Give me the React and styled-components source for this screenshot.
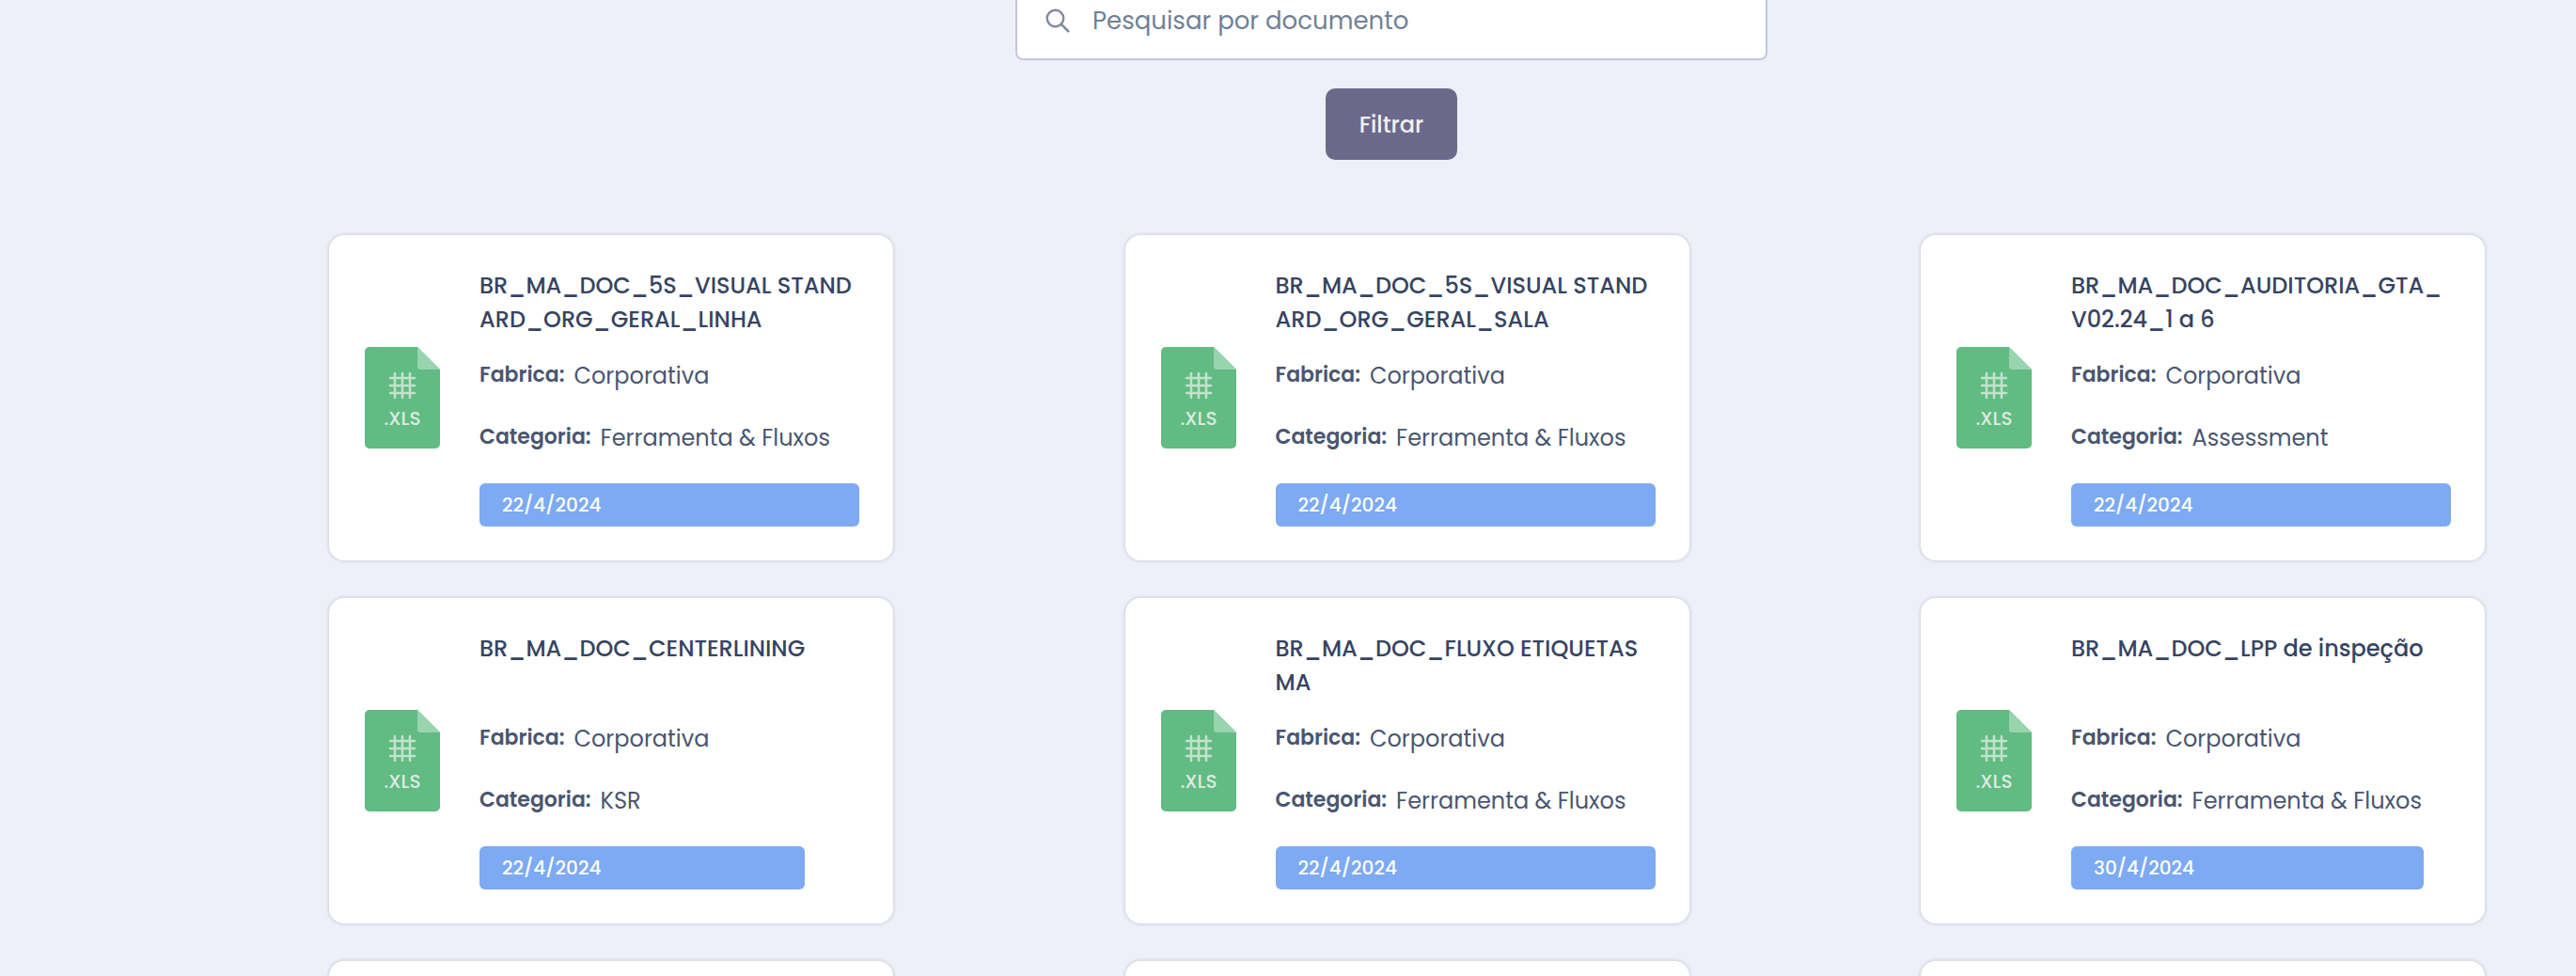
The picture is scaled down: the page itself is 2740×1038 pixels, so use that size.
import React from "react";
import styled, { createGlobalStyle } from "styled-components";
import { HiOutlineSearch } from "react-icons/hi";

const GlobalStyle = createGlobalStyle`
  *, *::before, *::after { box-sizing: border-box; }
  body {
    margin: 0;
    background: #edf0f8;
    color: #4a5670;
    font-family: Poppins, Inter, "Open Sans", sans-serif;
  }
`;

const Page = styled.div`
  height: 100vh;
  overflow: hidden;
  padding-left: 220px;
`;

const Main = styled.main`
  display: flex;
  flex-direction: column;
  gap: 80px;
  margin-top: -20px;
`;

const Filters = styled.form`
  display: flex;
  flex-direction: column;
  align-items: center;
  gap: 30px;
`;

const SearchField = styled.label`
  display: flex;
  align-items: center;
  gap: 22px;
  width: 100%;
  max-width: 800px;
  height: 84px;
  padding: 0 28px;
  border: 2px solid #c3c8d6;
  border-radius: 8px;
  background: #fff;
  color: #828b9e;
`;

const SearchInput = styled.input`
  flex: 1;
  min-width: 0;
  height: 100%;
  padding: 0;
  border: 0;
  outline: 0;
  background: transparent;
  color: #4a5670;
  font: inherit;
  font-size: 26px;

  &::placeholder {
    color: #718096;
    opacity: 1;
  }
`;

const FilterButton = styled.button`
  width: 140px;
  height: 76px;
  border: 0;
  border-radius: 10px;
  background: #6b698b;
  color: #f0f0f2;
  font: inherit;
  font-size: 24px;
  font-weight: 500;
  cursor: pointer;
`;

const Grid = styled.section`
  display: grid;
  grid-template-columns: repeat(3, minmax(0, 600px));
  justify-content: space-between;
  gap: 40px;
  padding: 0 97px 40px 130px;
`;

const Card = styled.article`
  display: flex;
  align-items: center;
  gap: 42px;
  min-height: 346px;
  padding: 36px 36px 36px 38px;
  border-radius: 16px;
  background: #fff;
  box-shadow: 0 0 4px rgba(0, 0, 0, 0.2);
`;

const FileIcon = styled.svg`
  flex: none;
  width: 80px;
  height: 108px;
`;

const Details = styled.div`
  display: flex;
  flex-direction: column;
  gap: 30px;
  min-width: 0;
`;

const Title = styled.h2`
  min-height: 72px;
  margin: 0 0 -6px;
  color: #364462;
  font-size: 24px;
  font-weight: 500;
  line-height: 36px;
  word-break: break-all;
`;

const Field = styled.p`
  display: flex;
  align-items: flex-start;
  gap: 10px;
  margin: 0;
`;

const FieldLabel = styled.strong`
  font-size: 22px;
  font-weight: 600;
  line-height: 34px;
`;

const FieldValue = styled.span`
  font-size: 24px;
  line-height: 36px;
`;

const DateBadge = styled.time`
  display: block;
  padding: 0 24px;
  border-radius: 6px;
  background: #7daaf2;
  color: #fff;
  font-size: 20px;
  font-weight: 500;
  line-height: 46px;
`;

const documents = [
  { title: "BR_MA_DOC_5S_VISUAL STANDARD_ORG_GERAL_LINHA", category: "Ferramenta & Fluxos", date: "22/4/2024" },
  { title: "BR_MA_DOC_5S_VISUAL STANDARD_ORG_GERAL_SALA", category: "Ferramenta & Fluxos", date: "22/4/2024" },
  { title: "BR_MA_DOC_AUDITORIA_GTA_V02.24_1 a 6", category: "Assessment", date: "22/4/2024" },
  { title: "BR_MA_DOC_CENTERLINING", category: "KSR", date: "22/4/2024" },
  { title: "BR_MA_DOC_FLUXO ETIQUETAS MA", category: "Ferramenta & Fluxos", date: "22/4/2024" },
  { title: "BR_MA_DOC_LPP de inspeção", category: "Ferramenta & Fluxos", date: "30/4/2024" },
];

function XlsIcon() {
  return (
    <FileIcon viewBox="0 0 80 108" role="img" aria-label="XLS">
      <path d="M5 0H56L80 24V103a5 5 0 0 1-5 5H5a5 5 0 0 1-5-5V5a5 5 0 0 1 5-5Z" fill="#61bb82" />
      <path d="M56 0L80 24H59a3 3 0 0 1-3-3Z" fill="#98d4ae" />
      <path
        d="M32 28V54M40 28V54M48 28V54M27 33H53M27 41H53M27 49H53"
        fill="none"
        stroke="#c4e2cd"
        strokeWidth="2.5"
        strokeLinecap="round"
      />
      <text x="40" y="83" textAnchor="middle" fill="#dcebe1" fontSize="20" fontWeight="500">
        .XLS
      </text>
    </FileIcon>
  );
}

function DocumentCard({ title, category, date }) {
  return (
    <Card>
      <XlsIcon />
      <Details>
        <Title>{title}</Title>
        <Field>
          <FieldLabel>Fabrica:</FieldLabel>
          <FieldValue>Corporativa</FieldValue>
        </Field>
        <Field>
          <FieldLabel>Categoria:</FieldLabel>
          <FieldValue>{category}</FieldValue>
        </Field>
        <DateBadge>{date}</DateBadge>
      </Details>
    </Card>
  );
}

export default function App() {
  return (
    <Page>
      <GlobalStyle />
      <Main>
        <Filters onSubmit={(event) => event.preventDefault()}>
          <SearchField>
            <HiOutlineSearch size={30} aria-hidden="true" />
            <SearchInput type="text" placeholder="Pesquisar por documento" aria-label="Pesquisar por documento" />
          </SearchField>
          <FilterButton type="submit">Filtrar</FilterButton>
        </Filters>
        <Grid>
          {documents.map((item) => (
            <DocumentCard key={item.title} {...item} />
          ))}
          <Card />
          <Card />
          <Card />
        </Grid>
      </Main>
    </Page>
  );
}
